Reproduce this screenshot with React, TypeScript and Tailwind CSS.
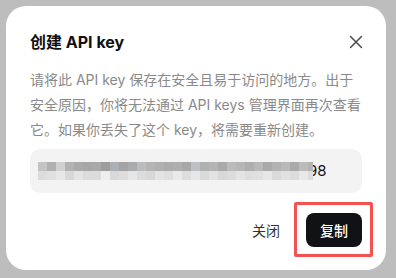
import React from "react";

const topRow = [
  "#c4c4c4", "#b0b0b0", "#cfd0cf", "#b2b2b2", "#aaaaaa", "#a7a7a7", "#a9a9a9", "#9e9e9e",
  "#aab0b4", "#a4a4a4", "#a9abac", "#bdbdbd", "#b5b5b5", "#b0b0b0", "#acacac", "#aeaeae",
  "#a8a8a8", "#bcc0c2", "#b0b0b0", "#b4b4b4", "#a9a9a9", "#bbbbbb", "#b6b6b6", "#aeaeae",
  "#b8b8b8", "#a9a9a9", "#b2b2b2", "#b7b9bb", "#aaaaaa", "#bcbcbc", "#b4b4b4",
];
const bottomRow = [
  "#dcdcdc", "#e0e0e0", "#e8e8e8", "#d8d8d8", "#e2e4e6", "#dcdcdc", "#dcdcdc", "#eeeeee",
  "#d9d9d9", "#dddddd", "#e6e6e6", "#dadcdd", "#d8d8d8", "#e4e4e4", "#dfdfdf", "#e8e9e9",
  "#dddddd", "#e6e6e6", "#dadada", "#e2e2e2", "#d8d8d8", "#dcdcdc", "#e4e4e4", "#dedede",
  "#e0e0e0", "#e6e6e6", "#dadada", "#e1e1e1", "#dcdcdc", "#e8e8e8", "#dddddd",
];

function Mosaic() {
  return (
    <div className="relative z-10 flex w-[275px] flex-col overflow-hidden">
      <div className="flex h-[9px]">
        {topRow.map((c, i) => (
          <div key={i} className="h-[9px] w-[9px] shrink-0" style={{ backgroundColor: c }} />
        ))}
      </div>
      <div className="flex h-[9px]">
        {bottomRow.map((c, i) => (
          <div key={i} className="h-[9px] w-[9px] shrink-0" style={{ backgroundColor: c }} />
        ))}
      </div>
    </div>
  );
}

export default function App() {
  return (
    <div
      className="h-[278px] w-[396px] overflow-hidden bg-[#bdbdbd] pl-[6px] pt-[6px]"
      style={{ fontFamily: 'Inter, "Noto Sans CJK SC", "Noto Sans", sans-serif' }}
    >
      <div className="flex h-[264px] w-[380px] flex-col rounded-[20px] bg-white px-[24px] pt-[24px]">
        <div className="flex h-[24px] items-center justify-between">
          <h2 className="text-[16px] font-bold leading-[24px] text-[#111111]">创建 API key</h2>
          <svg width="14" height="14" viewBox="0 0 14 14" className="mr-[-1px]">
            <path d="M1.5 1.5 L12.5 12.5 M12.5 1.5 L1.5 12.5" stroke="#4a4a4a" strokeWidth="1.5" strokeLinecap="round" />
          </svg>
        </div>
        <p className="mt-[13px] text-[14px] leading-[25px] text-[#8a8a8a]">
          请将此 API key 保存在安全且易于访问的地方。出于安全原因，你将无法通过 API keys 管理界面再次查看它。如果你丢失了这个 key，将需要重新创建。
        </p>
        <div className="mt-[7px] flex h-[44px] items-center rounded-[10px] bg-[#f3f3f3] pl-[8px]">
          <Mosaic />
          <span className="-ml-[5px] text-[15px] text-[#111111]">98</span>
        </div>
        <div className="mt-[20px] flex items-center justify-end">
          <button className="mr-[26px] text-[14px] text-[#333333]">关闭</button>
          <div className="relative">
            <button className="flex h-[34px] w-[56px] items-center justify-center rounded-[8px] bg-[#111216] text-[14px] font-medium text-white">
              复制
            </button>
            <span className="pointer-events-none absolute -bottom-[10px] -left-[12px] -right-[11px] -top-[11px] rounded-[2px] border-[3px] border-[#f45252]" />
          </div>
        </div>
      </div>
    </div>
  );
}
